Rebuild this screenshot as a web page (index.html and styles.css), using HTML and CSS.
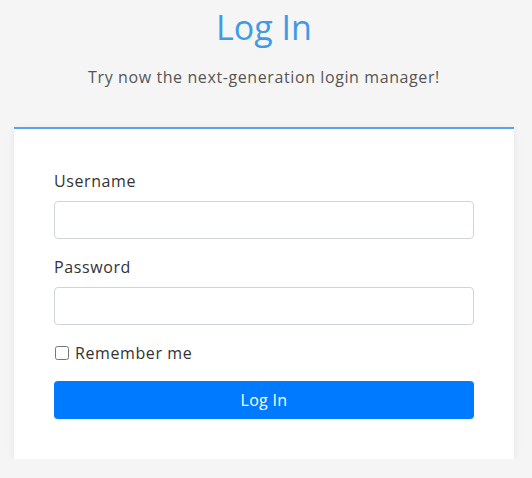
FILE: index.html
```html
<!DOCTYPE html>
<html lang="en">
<head>
    <meta charset="UTF-8">
    <meta name="viewport" content="width=device-width, initial-scale=1.0">
    <title>Log In</title>
    <link rel="stylesheet" href="styles.css">
</head>
<body>
    <div class="page">
        <h1 class="title">Log In</h1>
        <p class="subtitle">Try now the next-generation login manager!</p>

        <div class="card">
            <form id="loginForm">
                <label for="username">Username</label>
                <input type="text" id="username">

                <label for="password">Password</label>
                <input type="password" id="password">

                <div class="remember">
                    <input type="checkbox" id="remember">
                    <label for="remember">Remember me</label>
                </div>

                <button type="button">Log In</button>
            </form>
        </div>
    </div>
</body>
</html>
```

FILE: styles.css
```css
body {
    margin: 0;
    font-family: "Open Sans", sans-serif;
    background-color: #f5f5f5;
    color: #333;
}
.page {
    padding: 0 18px 0 14px;
}
.title {
    margin: 6px 0 0;
    font-size: 34px;
    font-weight: 400;
    line-height: 42px;
    text-align: center;
    color: #3f9be6;
}
.subtitle {
    margin: 17px 0 0;
    font-size: 16px;
    line-height: 24px;
    letter-spacing: 0.6px;
    text-align: center;
    color: #555;
}
.card {
    margin-top: 38px;
    padding: 40px;
    background: #fff;
    border-top: 2px solid #5aa2f2;
    box-shadow: 0 2px 8px rgba(0, 0, 0, 0.07);
}
label {
    display: block;
    margin-bottom: 8px;
    font-size: 16px;
    line-height: 24px;
    letter-spacing: 0.6px;
}
input[type="text"],
input[type="password"] {
    display: block;
    box-sizing: border-box;
    width: 100%;
    height: 38px;
    margin-bottom: 16px;
    border: 1px solid #ced4da;
    border-radius: 4px;
}
.remember {
    display: flex;
    align-items: center;
    gap: 6px;
    margin-bottom: 16px;
}
.remember input {
    margin: 0 0 0 1px;
    width: 14px;
    height: 14px;
}
.remember label {
    margin: 0;
}
button {
    display: block;
    width: 100%;
    height: 38px;
    background-color: #007bff;
    color: #fff;
    border: none;
    border-radius: 4px;
    font-family: inherit;
    font-size: 16px;
    letter-spacing: 0.3px;
}
```
